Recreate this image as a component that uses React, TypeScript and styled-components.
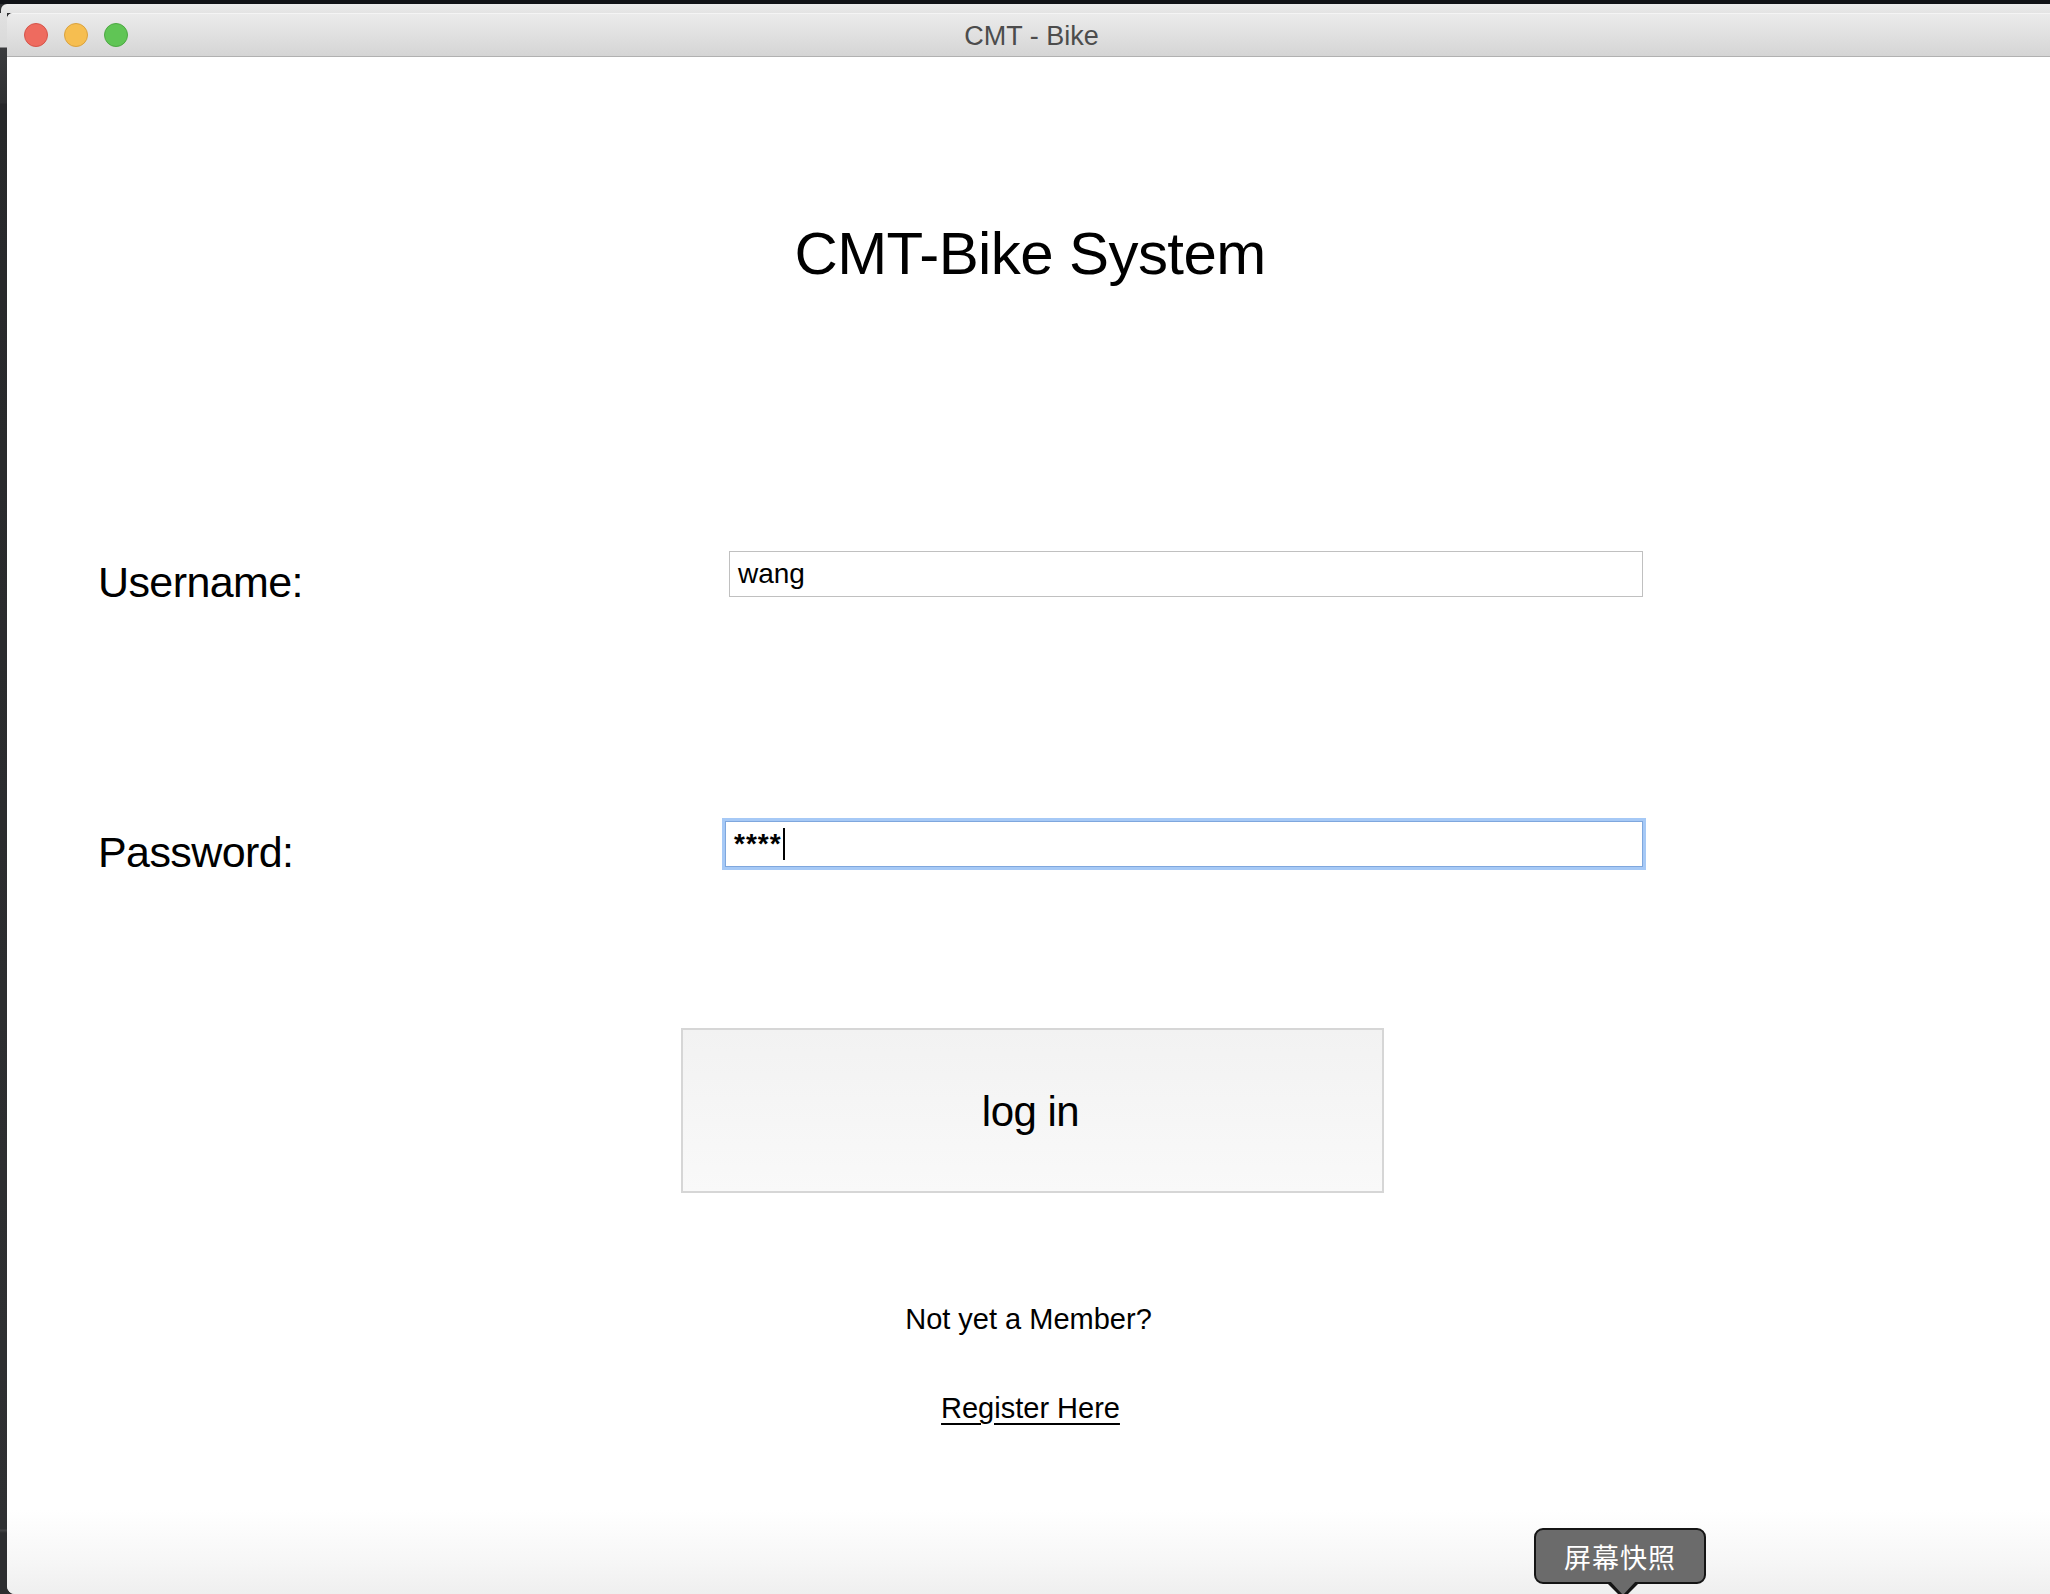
import React from "react";
import styled, { createGlobalStyle } from "styled-components";

const GlobalStyle = createGlobalStyle`
  html, body {
    margin: 0;
    padding: 0;
    width: 2050px;
    height: 1594px;
    overflow: hidden;
    background: #2e2f31;
  }
  * { box-sizing: border-box; }
`;

const Desktop = styled.div`
  width: 2050px;
  height: 1594px;
  display: flex;
  flex-direction: column;
  background: #2e2f31;
  font-family: "Liberation Sans", Arial, sans-serif;
  color: #000;
`;

const TopEdge = styled.div`
  height: 4px;
  flex: none;
  background: #111317;
`;

const BehindBar = styled.div`
  height: 9px;
  flex: none;
  background: linear-gradient(#ececec, #e3e3e3);
  border-top-left-radius: 6px;
  margin-left: 1px;
`;

const Body = styled.div`
  flex: 1;
  display: flex;
  min-height: 0;
`;

const SideStrip = styled.div`
  width: 7px;
  flex: none;
  background: linear-gradient(
    #e1e1e1 0px,
    #d9d9d9 34px,
    #3a3b3d 35px,
    #2f3032 90px,
    #27282a 91px,
    #2f3032 1516px,
    #444547 1517px,
    #2d2e30 1520px
  );
`;

const Window = styled.div`
  flex: 1;
  display: flex;
  flex-direction: column;
  min-width: 0;
  border-top-left-radius: 6px;
  border-bottom-left-radius: 8px;
  overflow: hidden;
  background: #fff;
`;

const TitleBar = styled.div`
  height: 44px;
  flex: none;
  display: grid;
  grid-template-columns: 1fr auto 1fr;
  align-items: center;
  padding: 0 11px 0 17px;
  background: linear-gradient(#ebebeb, #d5d5d5);
  border-bottom: 1px solid #b1b1b1;
  border-top: 1px solid #f4f4f4;
`;

const Lights = styled.div`
  display: flex;
  gap: 16px;
  align-items: center;
`;

const Light = styled.span<{ $fill: string; $edge: string }>`
  width: 24px;
  height: 24px;
  border-radius: 50%;
  background: ${(p) => p.$fill};
  border: 1px solid ${(p) => p.$edge};
`;

const WindowTitle = styled.div`
  font-size: 27px;
  color: #4c4c4c;
  line-height: 27px;
  padding-top: 2px;
`;

const Content = styled.div`
  position: relative;
  flex: 1;
  display: flex;
  flex-direction: column;
  align-items: center;
  padding-top: 167px;
  background: linear-gradient(
    #ffffff 0,
    #ffffff calc(100% - 84px),
    #f6f6f6 calc(100% - 30px),
    #efefef 100%
  );
`;

const Heading = styled.h1`
  margin: 0;
  font-size: 60px;
  line-height: 60px;
  font-weight: 400;
  letter-spacing: -0.6px;
  padding-left: 3px;
`;

const Form = styled.div`
  align-self: stretch;
  margin-top: 267px;
  padding-left: 91px;
  display: grid;
  grid-template-columns: 631px 914px;
  grid-auto-rows: 46px;
  row-gap: 224px;
`;

const Label = styled.div`
  padding-top: 10px;
  font-size: 43px;
  line-height: 43px;
  letter-spacing: -0.6px;
  white-space: nowrap;
`;

const Field = styled.div<{ $focused?: boolean }>`
  height: 46px;
  display: flex;
  align-items: center;
  padding-left: 8px;
  margin-left: ${(p) => (p.$focused ? "-4px" : "0")};
  background: #fff;
  border: 1px solid ${(p) => (p.$focused ? "#7fa7dd" : "#c0c0c0")};
  box-shadow: ${(p) => (p.$focused ? "0 0 0 3px #a6c9f6" : "none")};
  font-size: 28px;
  line-height: 28px;
`;

const Masked = styled.span`
  letter-spacing: 1px;
  font-weight: 700;
`;

const Caret = styled.span`
  width: 2px;
  height: 32px;
  background: #000;
  margin-left: 1px;
`;

const LoginButton = styled.button`
  margin-top: 161px;
  margin-left: 8px;
  width: 703px;
  height: 165px;
  border: 2px solid #d6d6d6;
  background: linear-gradient(#f2f2f2, #f9f9f9);
  font-family: "Liberation Sans", Arial, sans-serif;
  font-size: 42px;
  line-height: 42px;
  letter-spacing: -0.5px;
  color: #000;
  padding: 2px 4px 0 0;
`;

const Prompt = styled.div`
  margin-top: 112px;
  font-size: 29px;
  line-height: 29px;
`;

const RegisterLink = styled.a`
  margin-top: 60px;
  margin-left: 4px;
  font-size: 29px;
  line-height: 29px;
  color: #000;
  text-decoration: underline;
  text-decoration-thickness: 2px;
  text-underline-offset: 5px;
  cursor: pointer;
`;

const Tooltip = styled.div`
  position: absolute;
  left: 1527px;
  top: 1471px;
  width: 172px;
  height: 56px;
  border: 2px solid #151515;
  border-radius: 9px;
  background: #6b6b6b;
  color: #fff;
  font-family: "Noto Sans CJK SC", "Noto Sans", sans-serif;
  font-size: 27px;
  line-height: 27px;
  display: flex;
  align-items: center;
  justify-content: center;
  letter-spacing: 1px;

  &::before {
    content: "";
    position: absolute;
    left: 70px;
    top: 100%;
    border-left: 17px solid transparent;
    border-right: 17px solid transparent;
    border-top: 17px solid #151515;
  }
  &::after {
    content: "";
    position: absolute;
    left: 73px;
    top: calc(100% - 2px);
    border-left: 14px solid transparent;
    border-right: 14px solid transparent;
    border-top: 15px solid #6b6b6b;
  }
`;

export default function App() {
  return (
    <>
      <GlobalStyle />
      <Desktop>
        <TopEdge />
        <BehindBar />
        <Body>
          <SideStrip />
          <Window>
            <TitleBar>
              <Lights>
                <Light $fill="#ee6b5f" $edge="#d5544a" />
                <Light $fill="#f6be50" $edge="#daa23e" />
                <Light $fill="#60c555" $edge="#4da843" />
              </Lights>
              <WindowTitle>CMT - Bike</WindowTitle>
              <div />
            </TitleBar>
            <Content>
              <Heading>CMT-Bike System</Heading>
              <Form>
                <Label>Username:</Label>
                <Field>wang</Field>
                <Label>Password:</Label>
                <Field $focused>
                  <Masked>****</Masked>
                  <Caret />
                </Field>
              </Form>
              <LoginButton>log in</LoginButton>
              <Prompt>Not yet a Member?</Prompt>
              <RegisterLink>Register Here</RegisterLink>
              <Tooltip>屏幕快照</Tooltip>
            </Content>
          </Window>
        </Body>
      </Desktop>
    </>
  );
}
